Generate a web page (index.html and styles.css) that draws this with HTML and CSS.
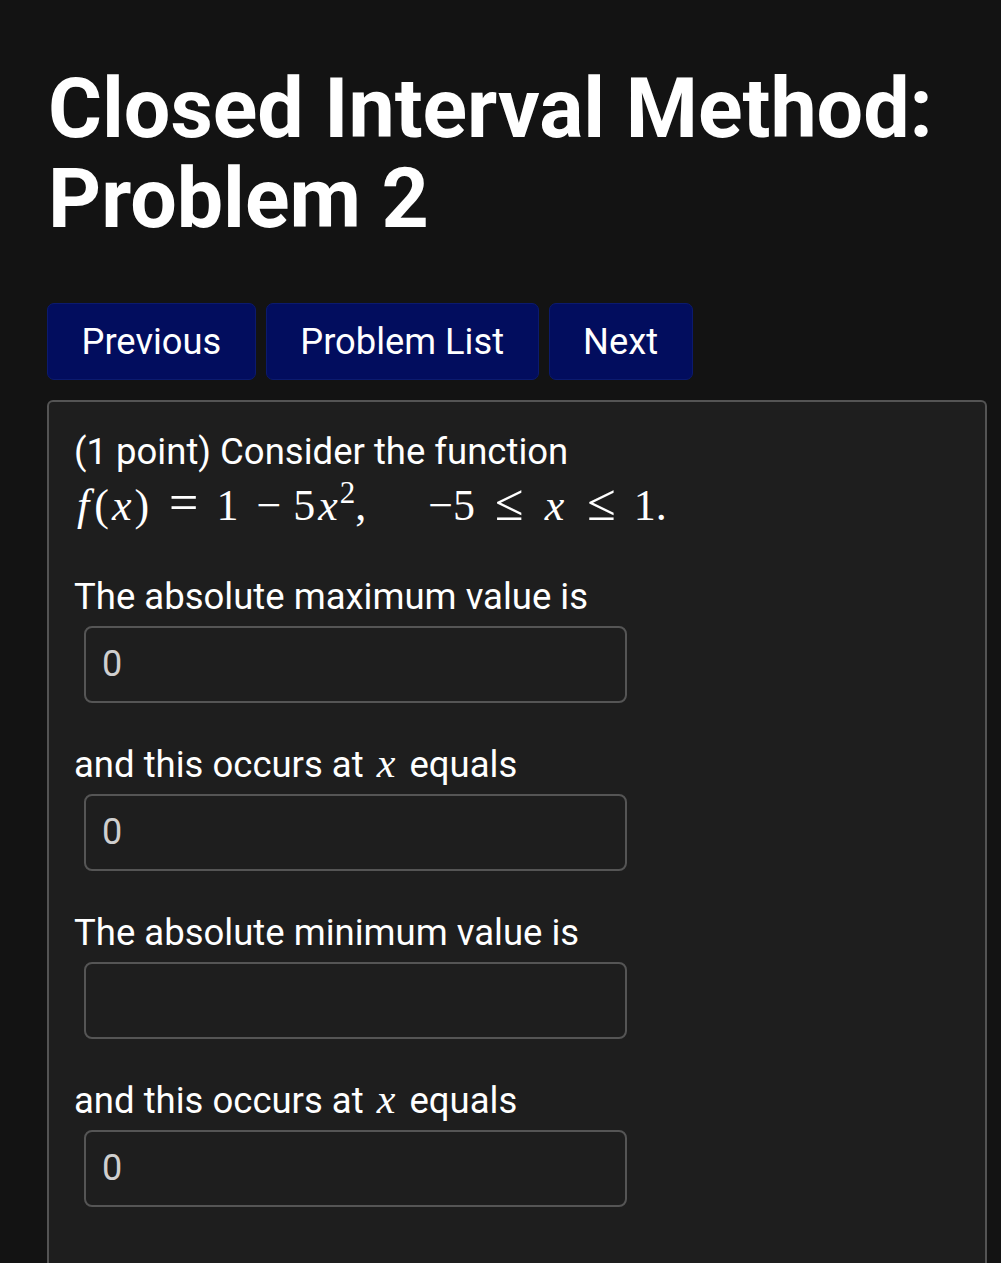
FILE: index.html
```html
<!DOCTYPE html>
<html>
<head>
<meta charset="utf-8">
<link rel="stylesheet" href="styles.css">
</head>
<body>
<main class="page">
  <h1 class="title">Closed Interval Method:<br>Problem 2</h1>
  <nav class="nav">
    <a class="btn">Previous</a>
    <a class="btn">Problem List</a>
    <a class="btn">Next</a>
  </nav>
  <section class="card">
    <p class="intro">(1 point) Consider the function</p>
    <p class="math"><i class="fi">f</i>(<i>x</i>)<span class="rel">=</span>1<span class="bin">−</span>5<i class="xs">x</i><sup>2</sup>,<span class="quad"></span>−5<span class="rel">≤</span><i>x</i><span class="rel">≤</span>1.</p>
    <p class="label first">The absolute maximum value is</p>
    <div class="field">0</div>
    <p class="label">and this occurs at <i class="mx">x</i> equals</p>
    <div class="field">0</div>
    <p class="label">The absolute minimum value is</p>
    <div class="field"></div>
    <p class="label">and this occurs at <i class="mx">x</i> equals</p>
    <div class="field">0</div>
  </section>
</main>
</body>
</html>
```
FILE: styles.css
```css
html, body {
  margin: 0;
  padding: 0;
  background: #131313;
  color: #ffffff;
  font-family: Roboto, "Liberation Sans", sans-serif;
}
.page {
  padding: 64px 14px 0 47px;
}
.title {
  margin: 0;
  font-size: 82.5px;
  line-height: 90px;
  font-weight: 700;
  padding-left: 1px;
}
.nav {
  display: flex;
  gap: 10px;
  margin-top: 59px;
}
.btn {
  display: block;
  background: #020d5e;
  border: 1px solid #0b1a6e;
  border-radius: 7px;
  color: #fff;
  font-size: 36.3px;
  line-height: 75px;
  padding: 0 33.5px;
}
.card {
  margin-top: 20px;
  background: #1e1e1e;
  border: 2px solid #545454;
  border-bottom: none;
  border-radius: 6px 6px 0 0;
  padding: 26px 25px 60px 25px;
  height: 900px;
}
.card p {
  margin: 0;
}
.intro {
  font-size: 36.5px;
  line-height: 48px;
}
.math {
  font-family: "Liberation Serif", serif;
  font-size: 44px;
  line-height: 60px;
  white-space: nowrap;
}
.math i, .mx {
  font-family: "Liberation Serif", serif;
  font-style: italic;
}
.math i {
  padding: 0 3px;
}
.math .fi {
  padding: 0 5px 0 3px;
}
.math .xs {
  padding: 0 2px 0 3px;
}
.math sup {
  font-size: 31px;
  vertical-align: 17px;
  line-height: 0;
}
.rel {
  font-size: 52px;
  line-height: 0;
  padding: 0 18px 0 20px;
}
.bin {
  padding: 0 12px 0 18px;
}
.quad {
  display: inline-block;
  width: 62px;
}
.label {
  font-size: 36.5px;
  line-height: 48px;
}
.label.first {
  margin-top: 37px;
}
.mx {
  font-size: 42px;
  line-height: 0;
  padding: 0 5px 0 4px;
}
.field {
  margin: 5px 0 38px 10px;
  width: 523px;
  height: 73px;
  border: 2px solid #555;
  border-radius: 8px;
  background: #1e1e1e;
  color: #cfcfcf;
  font-size: 36px;
  line-height: 73px;
  padding-left: 16px;
}
```
